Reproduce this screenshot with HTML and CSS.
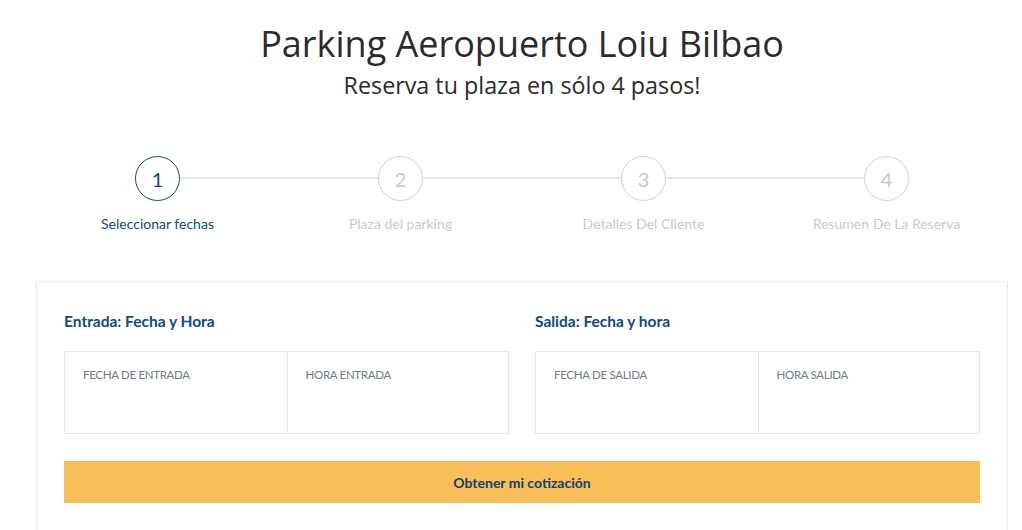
FILE: index.html
```html
<!DOCTYPE html>
<html lang="es">
<head>
<meta charset="utf-8">
<title>Parking Aeropuerto Loiu Bilbao</title>
<link rel="stylesheet" href="styles.css">
</head>
<body>
<main class="page">
  <header class="hero">
    <h1 class="title">Parking Aeropuerto Loiu Bilbao</h1>
    <p class="subtitle">Reserva tu plaza en sólo 4 pasos!</p>
  </header>

  <ol class="steps">
    <li class="step active"><span class="circle">1</span><span class="label">Seleccionar fechas</span></li>
    <li class="step"><span class="circle">2</span><span class="label">Plaza del parking</span></li>
    <li class="step"><span class="circle">3</span><span class="label">Detalles Del Cliente</span></li>
    <li class="step last"><span class="circle">4</span><span class="label">Resumen De La Reserva</span></li>
  </ol>

  <section class="card">
    <div class="groups">
      <div class="group">
        <h2 class="group-title">Entrada: Fecha y Hora</h2>
        <div class="fields">
          <div class="field"><span class="field-label">FECHA DE ENTRADA</span></div>
          <div class="field"><span class="field-label">HORA ENTRADA</span></div>
        </div>
      </div>
      <div class="group">
        <h2 class="group-title">Salida: Fecha y hora</h2>
        <div class="fields">
          <div class="field"><span class="field-label">FECHA DE SALIDA</span></div>
          <div class="field"><span class="field-label">HORA SALIDA</span></div>
        </div>
      </div>
    </div>
    <button class="cta" type="button">Obtener mi cotización</button>
  </section>
</main>
</body>
</html>
```

FILE: styles.css
```css
* { box-sizing: border-box; }

html, body {
  margin: 0;
  padding: 0;
  background: #ffffff;
}

body {
  font-family: "Open Sans", "Liberation Sans", sans-serif;
  overflow: hidden;
}

.page {
  width: 972px;
  margin-left: 36px;
}

.hero {
  text-align: center;
  padding-top: 23px;
}

.title {
  margin: 0;
  font-weight: 400;
  font-size: 36px;
  line-height: 42px;
  color: #2b2b2b;
  letter-spacing: 0;
}

.subtitle {
  margin: 5px 0 0 0;
  font-size: 23.3px;
  line-height: 30px;
  color: #2b2b2b;
}

.steps {
  list-style: none;
  margin: 56px 0 0 0;
  padding: 0;
  display: grid;
  grid-template-columns: repeat(4, 1fr);
}

.step {
  position: relative;
  display: flex;
  flex-direction: column;
  align-items: center;
}

.step::after {
  content: "";
  position: absolute;
  top: 21px;
  left: 50%;
  width: 100%;
  height: 2px;
  background: #e8e8e8;
  z-index: 0;
}

.step.last::after { display: none; }

.circle {
  position: relative;
  z-index: 1;
  width: 45px;
  height: 45px;
  border-radius: 50%;
  border: 1px solid #cdd3dc;
  background: #ffffff;
  display: flex;
  align-items: center;
  justify-content: center;
  font-family: "Lato", "Liberation Sans", sans-serif;
  font-size: 20px;
  color: #c3cad4;
}

.label {
  margin-top: 14px;
  font-family: "Lato", "Liberation Sans", sans-serif;
  font-size: 14px;
  line-height: 18px;
  color: #c3cad4;
}

.step.active .circle {
  border-color: #0d4a80;
  color: #0d4a80;
}

.step.active .label { color: #0d4a80; }

.card {
  margin-top: 48px;
  border: 1px solid #ececec;
  padding: 27px 27px 26px 27px;
  height: 300px;
}

.groups {
  display: grid;
  grid-template-columns: 1fr 1fr;
  column-gap: 26px;
}

.group-title {
  margin: 0;
  font-family: "Lato", "Liberation Sans", sans-serif;
  font-weight: 700;
  font-size: 15.5px;
  line-height: 24px;
  color: #0d4a80;
}

.fields {
  margin-top: 18px;
  display: grid;
  grid-template-columns: 1fr 1fr;
  border: 1px solid #e8e8e8;
  height: 83px;
}

.field {
  padding: 10px 18px;
}

.field + .field { border-left: 1px solid #e8e8e8; }

.field-label {
  font-family: "Lato", "Liberation Sans", sans-serif;
  font-size: 11.5px;
  letter-spacing: -0.3px;
  color: #707a88;
}

.cta {
  display: block;
  width: 100%;
  margin-top: 27px;
  height: 42px;
  border: 0;
  background: #f8be57;
  font-family: "Lato", "Liberation Sans", sans-serif;
  font-weight: 700;
  font-size: 14px;
  color: #0d3f70;
  cursor: pointer;
}
```
